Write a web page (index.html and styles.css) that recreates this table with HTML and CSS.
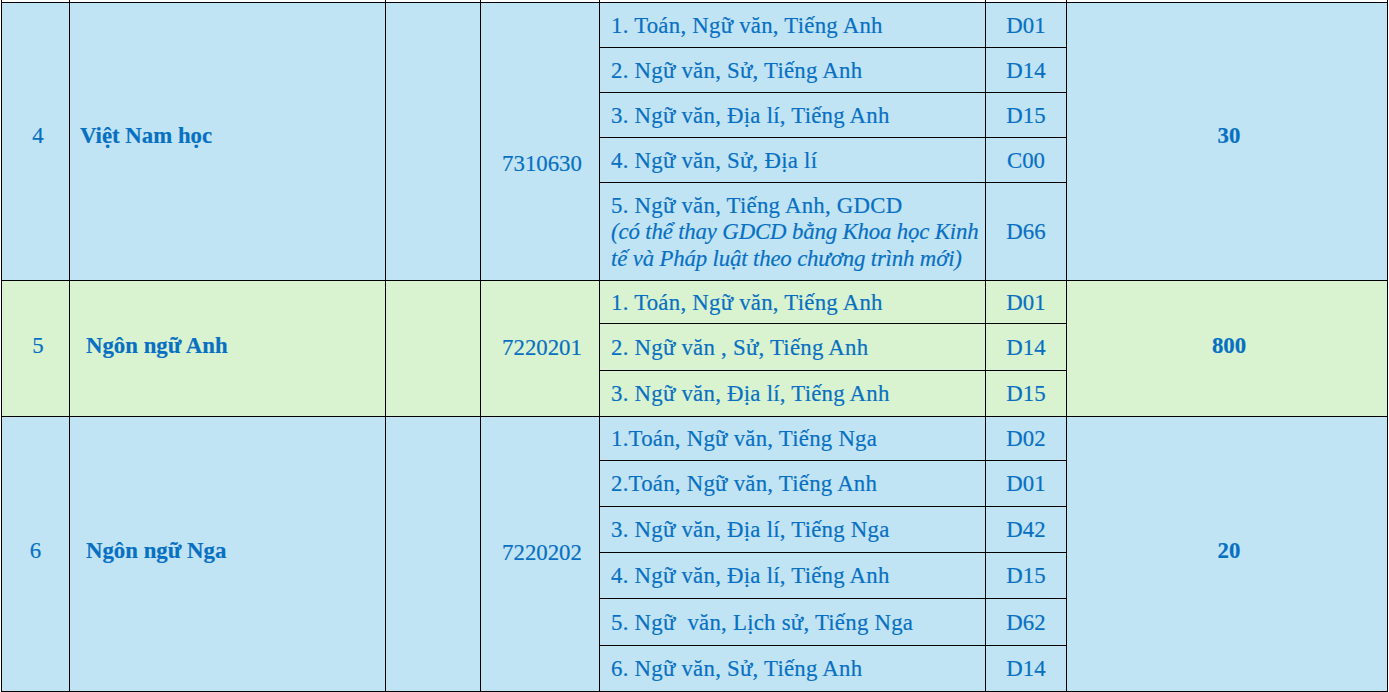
FILE: index.html
```html
<!DOCTYPE html>
<html lang="vi">
<head>
<meta charset="utf-8">
<title>Ngành tuyển sinh</title>
<link rel="stylesheet" href="styles.css">
</head>
<body>
<table class="grid">
  <colgroup>
    <col class="c-no"><col class="c-name"><col class="c-empty"><col class="c-code"><col class="c-subj"><col class="c-combo"><col class="c-quota">
  </colgroup>
  <tbody>
    <tr class="cut">
      <td></td><td></td><td></td><td></td><td></td><td></td><td></td>
    </tr>

    <tr class="blue h45">
      <td class="no shift up" rowspan="5">4</td>
      <td class="name up" rowspan="5">Việt Nam học</td>
      <td rowspan="5"></td>
      <td class="code code-low" rowspan="5">7310630</td>
      <td class="subj">1. Toán, Ngữ văn, Tiếng Anh</td>
      <td class="combo">D01</td>
      <td class="quota up" rowspan="5">30</td>
    </tr>
    <tr class="blue h45"><td class="subj">2. Ngữ văn, Sử, Tiếng Anh</td><td class="combo">D14</td></tr>
    <tr class="blue h45"><td class="subj">3. Ngữ văn, Địa lí, Tiếng Anh</td><td class="combo">D15</td></tr>
    <tr class="blue h45"><td class="subj">4. Ngữ văn, Sử, Địa lí</td><td class="combo">C00</td></tr>
    <tr class="blue h98">
      <td class="subj multi">5. Ngữ văn, Tiếng Anh, GDCD<br><em>(có thể thay GDCD bằng Khoa học Kinh<br>tế và Pháp luật theo chương trình mới)</em></td>
      <td class="combo">D66</td>
    </tr>

    <tr class="green h43">
      <td class="no shift" rowspan="3">5</td>
      <td class="name indent" rowspan="3">Ngôn ngữ Anh</td>
      <td rowspan="3"></td>
      <td class="code" rowspan="3">7220201</td>
      <td class="subj">1. Toán, Ngữ văn, Tiếng Anh</td>
      <td class="combo">D01</td>
      <td class="quota" rowspan="3">800</td>
    </tr>
    <tr class="green h47"><td class="subj">2. Ngữ văn , Sử, Tiếng Anh</td><td class="combo">D14</td></tr>
    <tr class="green h46"><td class="subj">3. Ngữ văn, Địa lí, Tiếng Anh</td><td class="combo">D15</td></tr>

    <tr class="blue h44">
      <td class="no" rowspan="6">6</td>
      <td class="name indent" rowspan="6">Ngôn ngữ Nga</td>
      <td rowspan="6"></td>
      <td class="code" rowspan="6">7220202</td>
      <td class="subj">1.Toán, Ngữ văn, Tiếng Nga</td>
      <td class="combo">D02</td>
      <td class="quota" rowspan="6">20</td>
    </tr>
    <tr class="blue h46"><td class="subj">2.Toán, Ngữ văn, Tiếng Anh</td><td class="combo">D01</td></tr>
    <tr class="blue h46"><td class="subj">3. Ngữ văn, Địa lí, Tiếng Nga</td><td class="combo">D42</td></tr>
    <tr class="blue h46"><td class="subj">4. Ngữ văn, Địa lí, Tiếng Anh</td><td class="combo">D15</td></tr>
    <tr class="blue h47"><td class="subj">5. Ngữ&nbsp; văn, Lịch sử, Tiếng Nga</td><td class="combo">D62</td></tr>
    <tr class="blue h46"><td class="subj">6. Ngữ văn, Sử, Tiếng Anh</td><td class="combo">D14</td></tr>
  </tbody>
</table>
</body>
</html>
```

FILE: styles.css
```css
html, body {
  margin: 0;
  padding: 0;
  background: #ffffff;
}

body {
  font-family: "Liberation Serif", "Times New Roman", serif;
}

.grid {
  margin-left: 1px;
  border-collapse: collapse;
  table-layout: fixed;
  width: 1386px;
  font-family: "Liberation Serif", "Times New Roman", serif;
  font-size: 22.8px;
  color: #0870c2;
  -webkit-text-stroke: 0.2px #0870c2;
}

.c-no { width: 68px; }
.c-name { width: 316px; }
.c-empty { width: 95px; }
.c-code { width: 119px; }
.c-subj { width: 386px; }
.c-combo { width: 81px; }
.c-quota { width: 321px; }

.grid td {
  border: 1px solid #000000;
  padding: 0;
  vertical-align: middle;
  line-height: 26.5px;
}

.cut td {
  height: 1px;
  border-top: none;
  background: #ffffff;
}
.cut { height: 2px; }

.blue td { background: #c0e4f4; }
.green td { background: #d9f3d0; }

.h43 { height: 43px; }
.h44 { height: 44px; }
.h45 { height: 45px; }
.h46 { height: 46px; }
.h47 { height: 47px; }
.h98 { height: 98px; }

.no {
  text-align: center;
  padding-bottom: 4px !important;
}
.grid td.shift {
  padding-left: 5px !important;
}

.name {
  font-weight: bold;
  padding-left: 10px !important;
  padding-bottom: 4px !important;
}
.name.indent {
  padding-left: 16px !important;
}

.grid td.up {
  padding-bottom: 9px !important;
}

.code {
  text-align: center;
  padding-left: 4px !important;
}
.code-low {
  padding-top: 46px !important;
}

.subj {
  padding-left: 11px !important;
  padding-right: 4px !important;
  padding-top: 3px !important;
  white-space: nowrap;
  letter-spacing: 0.25px;
}

.multi em {
  font-style: italic;
  letter-spacing: -0.15px;
}

.combo {
  text-align: center;
  padding-top: 3px !important;
}

.quota {
  text-align: center;
  font-weight: bold;
  padding-left: 4px !important;
  padding-bottom: 4px !important;
}
```
